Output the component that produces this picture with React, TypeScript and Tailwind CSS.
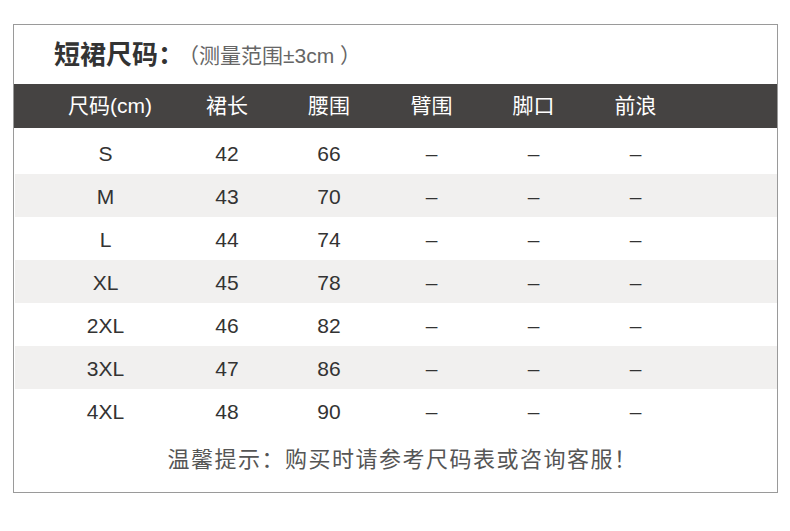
import React from 'react';

const headers = ['尺码(cm)', '裙长', '腰围', '臂围', '脚口', '前浪'];

const rows: string[][] = [
  ['S', '42', '66', '–', '–', '–'],
  ['M', '43', '70', '–', '–', '–'],
  ['L', '44', '74', '–', '–', '–'],
  ['XL', '45', '78', '–', '–', '–'],
  ['2XL', '46', '82', '–', '–', '–'],
  ['3XL', '47', '86', '–', '–', '–'],
  ['4XL', '48', '90', '–', '–', '–'],
];

const font = { fontFamily: '"Liberation Sans", "Noto Sans CJK SC", sans-serif' };

const App: React.FC = () => {
  return (
    <div className="w-[790px] h-[531px] bg-white pt-[24px] pl-[13px]" style={font}>
      <div className="w-[765px] h-[469px] border border-[#9a9a9a] flex flex-col">
        {/* Title */}
        <div className="h-[59px] flex items-center pl-[40px] pt-[2px]">
          <span className="text-[26px] font-bold text-[#333]">短裙尺码：</span>
          <span className="text-[21px] text-[#666] ml-[-6px]">（测量范围±3cm ）</span>
        </div>

        {/* Header bar */}
        <div className="h-[44px] bg-[#454342] grid grid-cols-[142px_102px_102px_103px_101px_103px] pl-[20px] items-center text-white text-[21px]">
          {headers.map((h, i) => (
            <div key={i} className={`text-center ${i === 0 ? 'pl-[10px]' : ''}`}>
              {h}
            </div>
          ))}
        </div>

        {/* Rows */}
        <div className="pt-[3px] pl-px">
          {rows.map((r, idx) => (
            <div
              key={idx}
              className={`h-[43px] grid grid-cols-[141px_102px_102px_103px_101px_103px] pl-[20px] pt-[3px] items-center text-[21px] text-[#333] ${
                idx % 2 === 1 ? 'bg-[#f1f0ef]' : 'bg-white'
              }`}
            >
              {r.map((c, j) => (
                <div key={j} className="text-center">
                  {c}
                </div>
              ))}
            </div>
          ))}
        </div>

        {/* Footer note */}
        <div className="flex-1 flex items-center justify-center pb-[5px] pl-[14px] text-[22px] text-[#555] tracking-[1.5px]">
          温馨提示：购买时请参考尺码表或咨询客服！
        </div>
      </div>
    </div>
  );
};

export default App;
